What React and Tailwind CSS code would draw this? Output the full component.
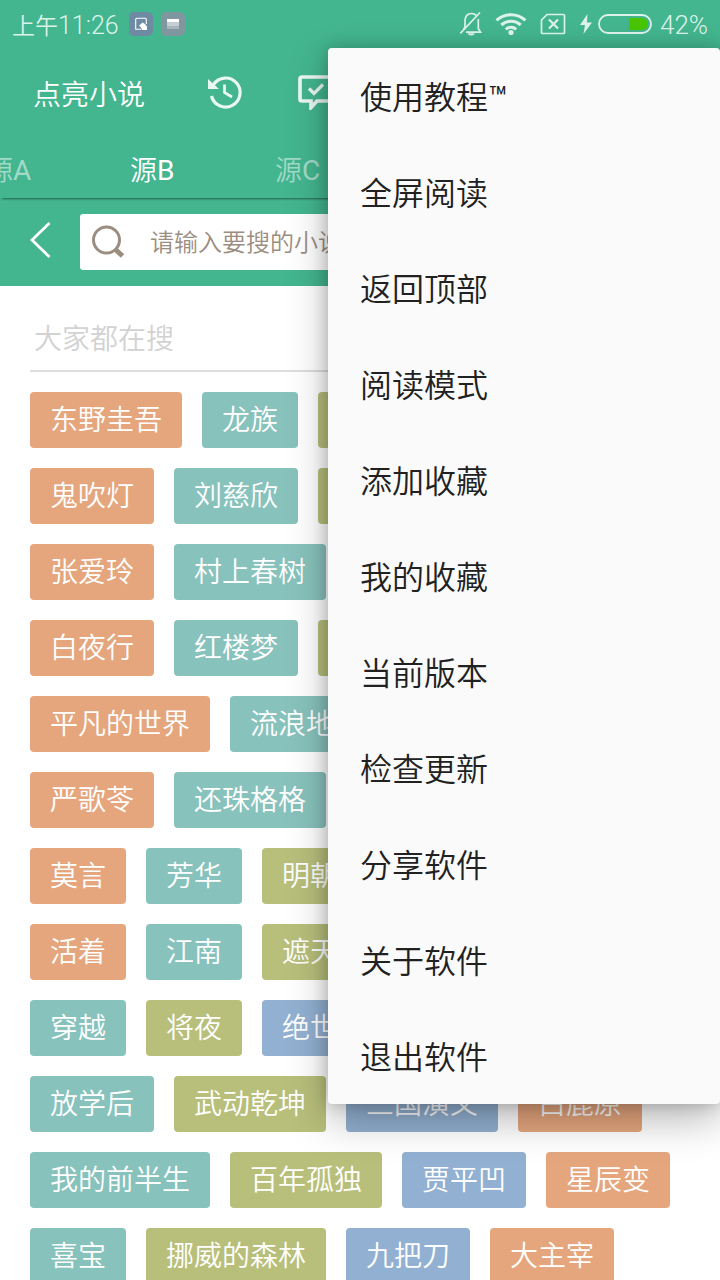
import React from 'react';

const MENU_ITEMS = [
    '使用教程™',
    '全屏阅读',
    '返回顶部',
    '阅读模式',
    '添加收藏',
    '我的收藏',
    '当前版本',
    '检查更新',
    '分享软件',
    '关于软件',
    '退出软件'
];

const ORANGE = 'bg-[#e5a67e]';
const TEAL = 'bg-[#88c2bc]';
const OLIVE = 'bg-[#b8bf7b]';
const BLUE = 'bg-[#92b0d1]';

const TAG_ROWS = [
    [['东野圭吾', ORANGE], ['龙族', TEAL], ['', OLIVE]],
    [['鬼吹灯', ORANGE], ['刘慈欣', TEAL], ['', OLIVE]],
    [['张爱玲', ORANGE], ['村上春树', TEAL]],
    [['白夜行', ORANGE], ['红楼梦', TEAL], ['', OLIVE]],
    [['平凡的世界', ORANGE], ['流浪地球', TEAL]],
    [['严歌苓', ORANGE], ['还珠格格', TEAL]],
    [['莫言', ORANGE], ['芳华', TEAL], ['明朝', OLIVE]],
    [['活着', ORANGE], ['江南', TEAL], ['遮天', OLIVE]],
    [['穿越', TEAL], ['将夜', OLIVE], ['绝世', BLUE]],
    [['放学后', TEAL], ['武动乾坤', OLIVE], ['三国演义', BLUE], ['白鹿原', ORANGE]],
    [['我的前半生', TEAL], ['百年孤独', OLIVE], ['贾平凹', BLUE], ['星辰变', ORANGE]],
    [['喜宝', TEAL], ['挪威的森林', OLIVE], ['九把刀', BLUE], ['大主宰', ORANGE]]
];

const StatusBar = () => (
    <div className="flex h-12 items-center pl-3 pr-3 text-[#dcf3ea]">
        <span className="w-[107px] pt-[3px] text-[23px] leading-none font-[350] whitespace-nowrap">
            上午<span className="text-[25px]">11:26</span>
        </span>
        <svg className="ml-[10px]" width="24" height="24" viewBox="0 0 24 24">
            <rect width="24" height="24" rx="5" fill="#6f8aa3" />
            <path d="M12 17.3H6.700V7l1-.8h8.600l1 .8v5" fill="none" stroke="#fff" strokeWidth="1.100" />
            <path d="M10 13.500l2-1.500 1.500-1.500L16 12l2 2.500V18h-5l-1-2.500z" fill="#fff" />
        </svg>
        <svg className="ml-2" width="24" height="24" viewBox="0 0 24 24">
            <rect width="24" height="24" rx="5" fill="#80979f" />
            <path d="M6 7h12v3.500H6z" fill="#fff" />
            <path d="M6 10.500h12V14H6z" fill="#c5d0d4" />
            <path d="M6 14h12v3H6z" fill="#a6b6bc" />
        </svg>
        <div className="flex-1" />
        {/* muted bell */}
        <svg className="mr-3" width="24" height="26" viewBox="0 0 24 26" fill="none" stroke="currentColor" strokeWidth="1.7">
            <path d="M4.500 18.500L6 16V9.500C6 5 8.500 2.500 12.500 2.500c2 0 3.600.6 4.800 1.800M19.300 8v9.500l2.200 3.700H7" />
            <path d="M1.300 22.300L21 1.500" />
            <path d="M9 22.300h6.500a3.200 2.200 0 0 1-6.500 0z" fill="currentColor" stroke="none" />
        </svg>
        <svg className="mr-[13px]" width="32" height="24" viewBox="0 0 32 24" fill="none" stroke="currentColor" strokeWidth="3.100">
            <path d="M1.600 8.300c8-7.500 20.800-7.500 28.800 0" />
            <path d="M6.300 13c5.500-5 13.900-5 19.400 0" />
            <path d="M10.800 17.300c3-2.600 7.400-2.600 10.400 0" />
            <circle cx="16" cy="20.500" r="2.600" fill="currentColor" stroke="none" />
        </svg>
        <svg className="mr-[14px]" width="26" height="22" viewBox="0 0 26 22" fill="none" stroke="currentColor" strokeWidth="1.700">
            <path d="M7 1.500h16.500a1 1 0 0 1 1 1v17a1 1 0 0 1-1 1h-21a1 1 0 0 1-1-1V7z" />
            <path d="M9 6.500l9 9M18 6.500l-9 9" strokeWidth="2.200" />
        </svg>
        <svg className="mr-[6px]" width="12" height="20" viewBox="0 0 12 20" fill="currentColor">
            <path d="M7.500 0L0 11h5L3.500 20 12 8.500H7z" />
        </svg>
        <svg className="mr-2" width="54" height="20" viewBox="0 0 54 20">
            <rect x="1" y="1" width="52" height="18" rx="9" fill="none" stroke="currentColor" strokeWidth="1.800" />
            <path d="M31 4h13a6 6 0 0 1 0 12H31z" fill="#48c400" />
        </svg>
        <span className="w-12 pt-px text-[26px] leading-none font-[350] whitespace-nowrap">42%</span>
    </div>
);

const Toolbar = () => (
    <div className="flex h-[88px] items-center pl-[33px] text-white">
        <span className="w-[173px] pt-[7px] text-[28px] leading-none font-[350]">点亮小说</span>
        <svg width="38" height="36" viewBox="0 0 38 36" fill="none" stroke="#eaf7f2" strokeWidth="3.200">
            <path d="M7.500 10.500A14.500 14.500 0 1 1 5.500 22" />
            <path d="M2 5l11 10H2z" fill="#eaf7f2" stroke="none" />
            <path d="M18.500 10.500v8l7.500 4.500" strokeWidth="2.800" />
        </svg>
        <svg className="ml-[53px]" width="40" height="36" viewBox="0 0 40 36" fill="none" stroke="#eaf7f2" strokeWidth="3.700">
            <path d="M5 3h30a2 2 0 0 1 2 2v20a2 2 0 0 1-2 2H20l-6 6.500V27H5a2 2 0 0 1-2-2V5a2 2 0 0 1 2-2z" />
            <path d="M12 14.500l5 5 9-9" strokeWidth="3.200" />
        </svg>
    </div>
);

const Tabs = () => (
    <div className="relative z-10 flex h-[62px] items-center pt-[7px] text-[27px] leading-none font-[350] text-white/50 shadow-[0_3px_2px_-2px_rgba(0,0,0,0.45)]">
        <span className="-ml-[14px] w-[144px]">源<span className="text-[28px] font-normal">A</span></span>
        <span className="w-[145px] text-white">源<span className="text-[28px] font-normal">B</span></span>
        <span>源<span className="text-[28px] font-normal">C</span></span>
    </div>
);

const SearchBar = () => (
    <div className="flex h-[88px] items-center pl-[30px] pr-5">
        <svg className="mb-1" width="21" height="38" viewBox="0 0 21 38" fill="none" stroke="#fff" strokeWidth="2.800">
            <path d="M19.500 2L2 19l17.500 17" />
        </svg>
        <div className="ml-[29px] flex h-14 flex-1 items-center rounded-[3px] bg-white pl-[11px]">
            <svg width="34" height="34" viewBox="0 0 34 34" fill="none" stroke="#9b8d80">
                <circle cx="15.500" cy="15" r="13" strokeWidth="3" />
                <path d="M24.500 24.500l7 6.500" strokeWidth="5" />
            </svg>
            <span className="ml-[25px] pt-0.5 text-2xl leading-none font-[350] text-[#9b8d80]">请输入要搜的小说</span>
        </div>
    </div>
);

const Tag = ({ label, color }) => (
    <span className={`h-14 min-w-[90px] shrink-0 rounded-[4px] px-5 text-[28px] leading-[57px] font-[350] text-white ${color}`}>
        {label}
    </span>
);

const PopupMenu = () => (
    <ul className="absolute top-12 right-0 z-20 w-[392px] rounded-[4px] bg-[#fafafa] shadow-[0_16px_40px_rgba(0,0,0,0.28),0_0_16px_rgba(0,0,0,0.2)]">
        {MENU_ITEMS.map((item) => (
            <li key={item} className="flex h-24 items-center pt-1 pl-8 text-[32px] leading-none font-[350] text-[#212121]">
                {item.replace('™', '')}
                {item.endsWith('™') && <span className="font-normal">™</span>}
            </li>
        ))}
    </ul>
);

const App = () => {
    return (
        <div className="relative h-[1280px] w-[720px] overflow-hidden bg-white font-['Roboto','Noto_Sans_CJK_SC',sans-serif]">
            <header className="bg-[#43b58f]">
                <StatusBar />
                <Toolbar />
                <Tabs />
                <SearchBar />
            </header>
            <main className="px-[30px]">
                <h2 className="h-[86px] border-b-2 border-[#dddddd] pt-10 pl-1 text-[28px] leading-none font-[350] text-[#d2d2d2]">
                    大家都在搜
                </h2>
                <div className="mt-5 flex flex-col gap-5">
                    {TAG_ROWS.map((row, i) => (
                        <div key={i} className="flex gap-5">
                            {row.map(([label, color], j) => (
                                <Tag key={j} label={label} color={color} />
                            ))}
                        </div>
                    ))}
                </div>
            </main>
            <PopupMenu />
        </div>
    );
};

export default App;
